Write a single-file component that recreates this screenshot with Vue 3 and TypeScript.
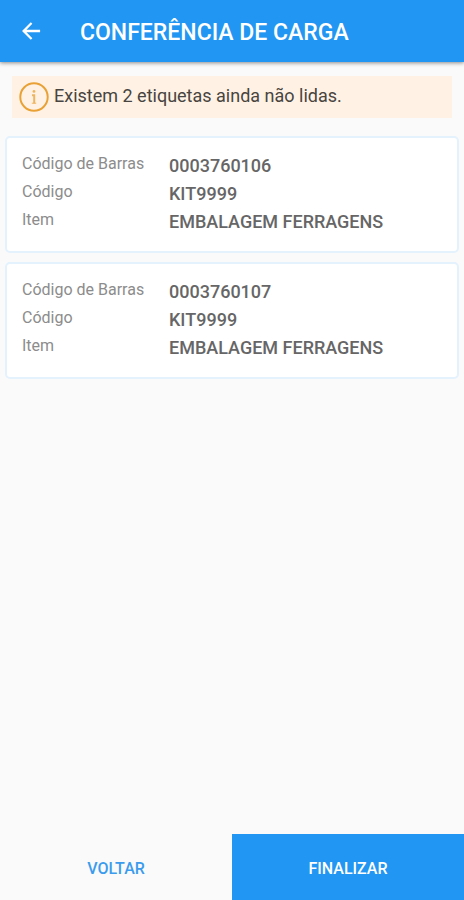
<script setup lang="ts">
interface Label {
  barcode: string
  code: string
  item: string
}

const labels: Label[] = [
  { barcode: '0003760106', code: 'KIT9999', item: 'EMBALAGEM FERRAGENS' },
  { barcode: '0003760107', code: 'KIT9999', item: 'EMBALAGEM FERRAGENS' },
]
</script>

<template>
  <div class="screen">
    <header class="bar">
      <button class="back" type="button" aria-label="Voltar">
        <svg viewBox="0 0 24 24" width="26" height="26" aria-hidden="true">
          <path d="M20.4 10.8H7.83l5.39-5.39L11.8 3.9 3.7 12l8.1 8.1 1.42-1.51L7.83 13.2H20.4z" fill="currentColor" />
        </svg>
      </button>
      <h1>CONFERÊNCIA DE CARGA</h1>
    </header>

    <main class="content">
      <p class="notice">
        <svg viewBox="0 0 30 30" width="30" height="30" aria-hidden="true">
          <circle cx="15" cy="15" r="13.7" fill="none" stroke="currentColor" stroke-width="2" />
          <g opacity="0.75">
            <circle cx="15" cy="9.4" r="1.4" fill="currentColor" />
            <path d="M13 13.2H15.2V21.4" fill="none" stroke="currentColor" stroke-width="2" />
            <path d="M12.8 21.2H17.2" stroke="currentColor" stroke-width="1" />
          </g>
        </svg>
        <span>Existem {{ labels.length }} etiquetas ainda não lidas.</span>
      </p>

      <dl v-for="label in labels" :key="label.barcode" class="card">
        <dt>Código de Barras</dt>
        <dd>{{ label.barcode }}</dd>
        <dt>Código</dt>
        <dd>{{ label.code }}</dd>
        <dt>Item</dt>
        <dd>{{ label.item }}</dd>
      </dl>
    </main>

    <footer class="actions">
      <button class="action" type="button">VOLTAR</button>
      <button class="action primary" type="button">FINALIZAR</button>
    </footer>
  </div>
</template>

<style>
body {
  margin: 0;
  background: #fafafa;
}
</style>

<style scoped>
.screen {
  display: flex;
  flex-direction: column;
  min-height: 100vh;
  background: #fafafa;
  font-family: Roboto, "Liberation Sans", sans-serif;
}

.bar {
  display: flex;
  align-items: center;
  gap: 36px;
  height: 62px;
  padding: 0 18px;
  background: #2196f3;
  color: #fff;
  box-shadow: 0 1px 4px rgba(0, 0, 0, 0.45);
}

.back {
  display: flex;
  padding: 0;
  border: 0;
  background: none;
  color: inherit;
}

h1 {
  margin: 0;
  padding-top: 3px;
  font-size: 23px;
  font-weight: 500;
  line-height: 28px;
}

.content {
  flex: 1;
  padding: 14px 5px;
}

.notice {
  display: flex;
  align-items: center;
  gap: 5px;
  height: 42px;
  margin: 0 7px 18px;
  padding: 0 7px;
  background: #fff2e4;
  color: #484440;
  font-size: 18px;
}

.notice svg {
  color: #e9a136;
}

.notice span {
  padding-bottom: 4px;
}

.card {
  display: grid;
  grid-template-columns: 147px 1fr;
  align-items: start;
  margin: 0 0 9px;
  padding: 14px 15px 15px;
  border: 2px solid #e3f2fd;
  border-radius: 5px;
  background: #fff;
}

dt {
  color: #8c8c8c;
  font-size: 16px;
  line-height: 24px;
}

dd {
  margin: 0;
  color: #666;
  font-size: 18px;
  font-weight: 500;
  line-height: 28px;
}

.actions {
  display: grid;
  grid-template-columns: 1fr 1fr;
}

.action {
  height: 66px;
  padding: 2px 6px 0;
  border: 0;
  background: transparent;
  color: #3b9cee;
  font: 500 16px Roboto, "Liberation Sans", sans-serif;
}

.primary {
  background: #2196f3;
  color: #fff;
}
</style>
